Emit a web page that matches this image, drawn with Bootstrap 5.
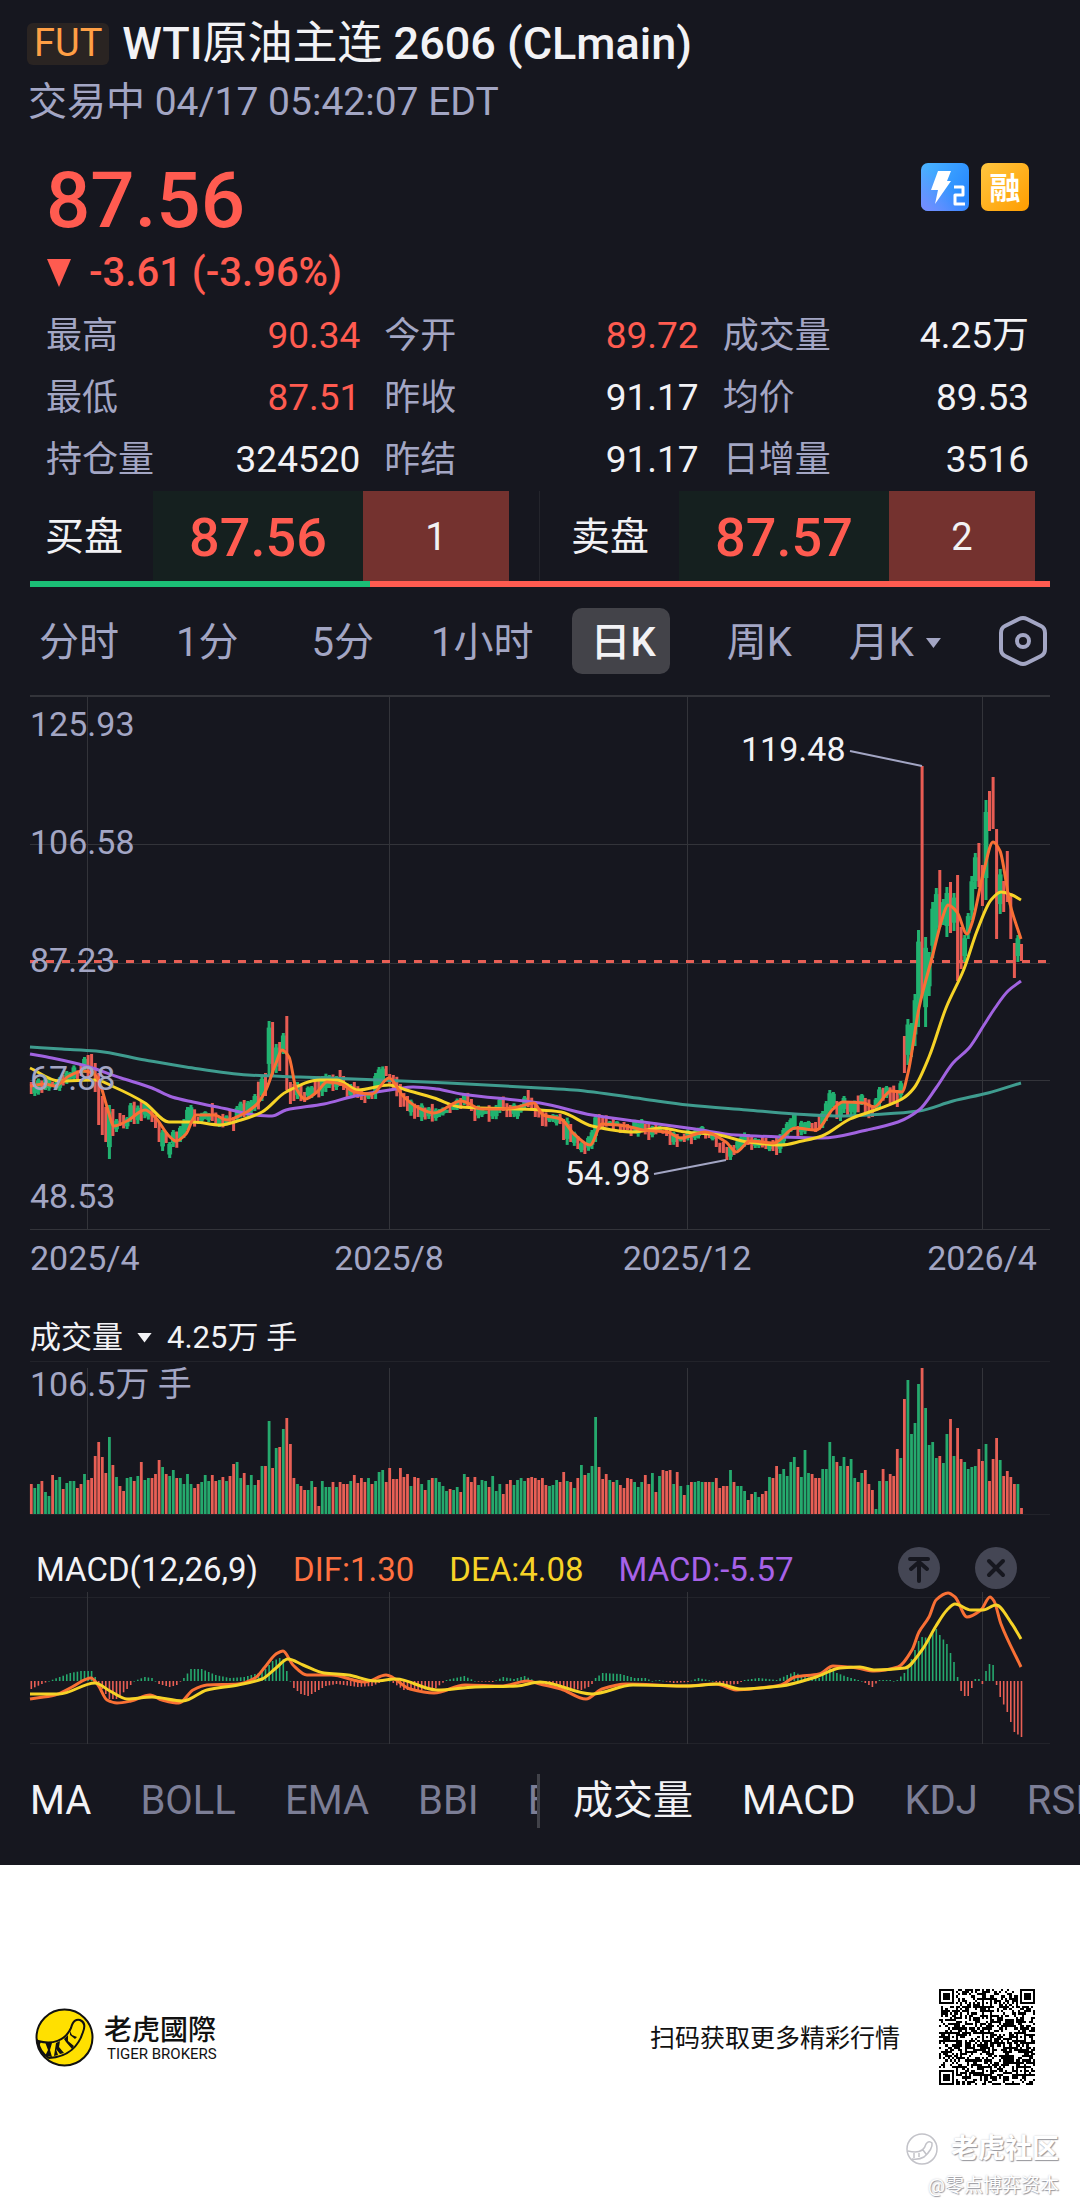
<!DOCTYPE html>
<html lang="zh-CN">
<head>
<meta charset="utf-8">
<meta name="viewport" content="width=device-width, initial-scale=1">
<title>WTI原油主连 2606 (CLmain)</title>
<link href="https://cdn.jsdelivr.net/npm/bootstrap@5.3.0/dist/css/bootstrap.min.css" rel="stylesheet">
<style>
:root{--ink:#16171f;--mist:#a3a6c4;--dim:#7c7e96;--snow:#f2f2f5;--down:#ff5b50;--up:#1bbf76}
body{background:#fff;color:var(--snow);font-family:Roboto,"Noto Sans CJK SC",sans-serif;margin:0}
.quote{background:var(--ink)}
.btn{--bs-btn-padding-x:0;--bs-btn-padding-y:0;--bs-btn-border-width:0px;--bs-btn-color:var(--mist);--bs-btn-hover-color:var(--snow);--bs-btn-border-radius:10px;--bs-btn-active-color:var(--snow)}
.quote-head{padding:14px 27px 0}
.quote-title{font-size:45px;line-height:60px;font-weight:500}
.kind-tag{font-size:38px;line-height:40px;height:42px;padding:0 7px;border-radius:6px;background:#2a2422;color:#ff9f45;margin-right:13px;font-weight:400}
.quote-time{font-size:39px;line-height:56px;color:var(--mist);padding-left:1px}
.quote-body{padding:31px 51px 0 46px}
.last-price{font-size:78px;line-height:80px;font-weight:500;color:var(--down)}
.price-change{font-size:40px;line-height:48px;font-weight:500;color:var(--down);margin-top:8px;gap:18px}
.marks{gap:12px;padding-top:2px}
.marks svg{width:48px;height:48px}
.stats{display:grid;grid-template-columns:314fr 314fr 306fr;column-gap:24px;margin:8px 0 0;line-height:62px}
.stats dt{font-size:36px;font-weight:400;color:var(--mist)}
.stats dd{font-size:37px;margin:0}
.fall{color:var(--down)}
.depth{margin:0 30px;height:90px}
.side{flex:1 1 0;padding-left:15px;padding-right:30px;border-right:1px solid #24252c}
.side-ask{padding-left:31px;padding-right:15px;border-right:0}
.side > div{padding-top:3px}
.side-name{font-size:39px}
.side-price{width:210px;background:#15201f;color:var(--down);font-size:54px;font-weight:500}
.side-qty{width:146px;background:#74322f;font-size:38px}
.balance{height:6px;margin:0 30px;background:var(--down)}
.balance div{background:var(--up)}
.periods{padding:21px 32px 22px 39px}
.periods .btn{font-size:40px;line-height:62px;padding-top:4px}
.periods .picked{background:#434349;color:var(--snow);font-weight:500;padding:4px 14px 0 18px;margin-left:-18px}
.periods .spread{margin-right:16px}
.caret{display:inline-block;width:15px;height:10px;background:currentColor;clip-path:polygon(0 0,100% 0,50% 100%)}
.plots{padding:0 30px}
.plots svg{display:block;width:100%;height:auto;overflow:visible}
.plots text{font-size:34px;fill:var(--mist)}
.plots .peak{fill:var(--snow)}
.grid-line{stroke:#33343a;stroke-width:1}
.grid-soft{stroke:#22232a;stroke-width:1}
.up-bar{fill:#25a96d}.down-bar{fill:#e85f55}
.up-candle{fill:#21b270}.down-candle{fill:#e85c53}
.curve{fill:none;stroke-width:3;stroke-linejoin:round}
.vol-head{margin-top:24px;font-size:31px;line-height:35px;gap:15px}
.vol-head .btn{font-size:31px;line-height:35px;color:var(--snow)}
.vol-head .caret{margin-left:14px}
.macd-head{margin-top:32px;padding:0 33px 0 6px;height:42px;margin-bottom:3px;font-size:33px;line-height:42px;gap:35px}
.macd-head span{padding-top:4px}
.macd-head svg{width:42px;height:42px}
.c-dif{color:#ff7140}.c-dea{color:#f6d327}.c-macd{color:#a762e8}
.indexes{padding:28px 0 37px}
.index-set{flex:1 1 0;min-width:0;height:54px;padding-left:30px;gap:49px;overflow:hidden;border-right:3px solid #414249}
.index-set + .index-set{border-right:0;padding-left:33px}
.index-set .btn{font-size:40px;line-height:54px;color:var(--dim);white-space:nowrap;flex:none}
.index-set .btn.on{color:var(--snow)}
.share{color:#111;padding:124px 45px 126px 35px}
.brand-logo{width:59px;height:59px;margin-right:10px}
.brand-zh{font-family:"Noto Sans CJK TC",sans-serif;font-size:28px;line-height:34px;font-weight:500}
.brand-en{font-size:15px;line-height:18px;padding-left:3px}
.scan-tip{font-size:25px;line-height:34px;padding-top:3px;margin-right:39px}
.qr{width:96px;height:96px}
.sign{padding:0 21px 8px 0;margin-top:-80px;color:#fff;text-shadow:1px 1px 1px #96969c,0 0 2px #c4c4c9}
.sign-name{font-size:27px;line-height:36px;font-weight:700;gap:13px}
.sign-name svg{width:32px;height:32px}
.sign-user{font-size:19px;line-height:38px}
</style>
</head>
<body>
<main class="quote overflow-hidden">
  <header class="quote-head">
    <h1 class="quote-title d-flex align-items-center m-0"><span class="kind-tag">FUT</span><span>WTI<span class="fw-normal">原油主连</span> 2606 (CLmain)</span></h1>
    <div class="quote-time">交易中 04/17 05:42:07 EDT</div>
  </header>

  <section class="quote-body">
    <div class="d-flex justify-content-between align-items-start">
      <div class="last-price">87.56</div>
      <div class="marks d-flex">
        <svg viewBox="0 0 48 48" role="img" aria-label="Level 2">
          <defs><linearGradient id="sky" x1="0" y1="0" x2="1" y2="0.6"><stop offset="0" stop-color="#4bb5ff"/><stop offset="1" stop-color="#2788ff"/></linearGradient>
          <linearGradient id="sky2" x1="0" y1="1" x2="0.5" y2="0.4"><stop offset="0" stop-color="#7a8bff"/><stop offset="1" stop-color="#7a8bff" stop-opacity="0"/></linearGradient></defs>
          <rect width="48" height="48" rx="7" fill="url(#sky)"/><rect width="48" height="48" rx="7" fill="url(#sky2)"/>
          <path d="M17 8h13l-4 10h4L14 41l3-14h-7z" fill="#fff"/>
          <path d="M33 24h9v8h-8v9h10" fill="none" stroke="#fff" stroke-width="3" stroke-linejoin="round"/>
        </svg>
        <svg viewBox="0 0 48 48">
          <defs><linearGradient id="gold" x1="0" y1="0" x2="1" y2="1"><stop offset="0" stop-color="#ffc640"/><stop offset="1" stop-color="#ff9d00"/></linearGradient></defs>
          <rect width="48" height="48" rx="7" fill="url(#gold)"/>
          <text x="24" y="36" text-anchor="middle" font-size="31" font-weight="700" fill="#fff">融</text>
        </svg>
      </div>
    </div>
    <div class="price-change d-flex align-items-center">
      <svg width="25" height="28" viewBox="0 0 50 56" aria-hidden="true"><path d="M2 0h48L26 56z" fill="currentColor"/></svg>
      <span>-3.61 (-3.96%)</span>
    </div>
    <dl class="stats">
      <div class="d-flex justify-content-between"><dt>最高</dt><dd class="fall">90.34</dd></div>
      <div class="d-flex justify-content-between"><dt>今开</dt><dd class="fall">89.72</dd></div>
      <div class="d-flex justify-content-between"><dt>成交量</dt><dd>4.25万</dd></div>
      <div class="d-flex justify-content-between"><dt>最低</dt><dd class="fall">87.51</dd></div>
      <div class="d-flex justify-content-between"><dt>昨收</dt><dd>91.17</dd></div>
      <div class="d-flex justify-content-between"><dt>均价</dt><dd>89.53</dd></div>
      <div class="d-flex justify-content-between"><dt>持仓量</dt><dd>324520</dd></div>
      <div class="d-flex justify-content-between"><dt>昨结</dt><dd>91.17</dd></div>
      <div class="d-flex justify-content-between"><dt>日增量</dt><dd>3516</dd></div>
    </dl>
  </section>

  <section class="depth d-flex">
    <div class="side d-flex">
      <div class="side-name flex-grow-1 d-flex align-items-center">买盘</div>
      <div class="side-price d-flex align-items-center justify-content-center">87.56</div>
      <div class="side-qty d-flex align-items-center justify-content-center">1</div>
    </div>
    <div class="side side-ask d-flex">
      <div class="side-name flex-grow-1 d-flex align-items-center">卖盘</div>
      <div class="side-price d-flex align-items-center justify-content-center">87.57</div>
      <div class="side-qty d-flex align-items-center justify-content-center">2</div>
    </div>
  </section>
  <div class="balance d-flex"><div style="width:33.3%"></div></div>

  <nav class="periods d-flex justify-content-between align-items-center" aria-label="周期">
    <button class="btn" type="button">分时</button>
    <button class="btn spread" type="button">1分</button>
    <button class="btn" type="button">5分</button>
    <button class="btn" type="button">1小时</button>
    <button class="btn picked" type="button">日K</button>
    <button class="btn" type="button">周K</button>
    <button class="btn d-flex align-items-center gap-2" type="button">月K<span class="caret ms-1"></span></button>
    <button class="btn d-flex pt-0" type="button" aria-label="设置">
      <svg width="50" height="52" viewBox="0 0 50 52" fill="none" stroke="currentColor" stroke-width="4"><path d="M21 4Q25 2 29 4L43 11Q47 13 47 18V34Q47 39 43 41L29 48Q25 50 21 48L7 41Q3 39 3 34V18Q3 13 7 11Z"/><circle cx="25" cy="26" r="6"/></svg>
    </button>
  </nav>

  <section class="plots">
    <svg id="kline" viewBox="0 0 1020 600" role="img" aria-label="日K">
      <path d="M0 0H1020" stroke="#33343a" stroke-width="2"/>
      <path class="grid-line" d="M0 148.5H1020M0 267.5H1020M0 384.5H1020M0 533.5H1020M57.5 0V534M359.5 0V534M657.5 0V534M952.5 0V534"/>
      <path d="M0 265.5H1018" stroke="#e85f55" stroke-width="3" stroke-dasharray="8 8"/>
      <g id="candles"></g>
      <path class="curve" stroke="#3f9c8f" data-points="0,351 32,353 66,355 115,364 156,371 218,379 270,381 349,384 418,387 510,392 544,394 613,403 658,409 717,414 765,418 806,420 854,418 889,415 923,405 958,397 991,387"/>
      <path class="curve" stroke="#a163e0" data-points="0,358 22,362 56,370 91,382 122,392 142,401 163,406 197,413 225,419 242,420 256,414 294,408 325,400 366,393 383,391 407,393 431,398 510,407 562,419 613,426 665,433 706,439 751,441 792,442 837,434 868,426 889,414 906,392 923,367 939,352 954,329 965,312 978,295 991,285"/>
      <path class="curve" stroke="#f6d327" data-points="0,372 29,385 66,384 84,391 115,407 139,426 163,426 190,429 211,424 232,416 256,396 290,384 307,384 328,394 359,389 376,394 404,402 431,411 510,414 531,416 562,430 603,436 631,432 655,436 689,439 717,446 751,449 772,445 792,440 820,423 848,413 872,403 884,392 899,361 916,312 934,273 947,235 961,204 971,196 982,199 991,204"/>
      <path class="curve" stroke="#f97035" data-points="0,390 15,388 25,390 39,380 53,375 63,377 70,388 77,411 84,430 97,425 115,414 125,421 139,440 146,445 156,438 166,419 184,419 197,424 211,419 225,410 235,396 246,367 252,354 259,361 266,392 275,403 287,396 297,386 311,388 325,396 342,398 359,382 373,400 387,411 404,417 431,405 452,413 469,413 487,411 504,407 513,419 531,423 544,438 560,449 572,428 596,430 613,434 637,436 651,442 675,436 696,446 706,456 720,445 744,447 765,432 786,434 803,413 813,406 834,407 844,411 861,395 872,396 878,377 889,312 903,258 913,220 918,209 927,216 937,238 942,227 954,174 963,146 970,155 980,208 991,243"/>
      <path d="M820 55L892 70M624 478L696 464" stroke="#a3a6c4" stroke-width="2"/>
      <text x="0" y="40">125.93</text><text x="0" y="158">106.58</text><text x="0" y="276">87.23</text><text x="0" y="394">67.88</text><text x="0" y="512">48.53</text>
      <text class="peak" x="711" y="65">119.48</text><text class="peak" x="535" y="489">54.98</text>
      <text x="0" y="574">2025/4</text><text x="359" y="574" text-anchor="middle">2025/8</text><text x="657" y="574" text-anchor="middle">2025/12</text><text x="952" y="574" text-anchor="middle">2026/4</text>
    </svg>

    <div class="vol-head d-flex align-items-center">
      <button class="btn d-flex align-items-center" type="button">成交量<span class="caret"></span></button>
      <span>4.25万 手</span>
    </div>
    <svg viewBox="0 0 1020 160" role="img" aria-label="成交量">
      <path class="grid-soft" d="M0 6.5H1020M0 159.5H1020"/>
      <path class="grid-line" d="M57.5 13V159M359.5 13V159M657.5 13V159M952.5 13V159"/>
      <g id="volumes"></g>
      <text x="0" y="41">106.5万 手</text>
    </svg>

    <div class="macd-head d-flex align-items-center">
      <span>MACD(12,26,9)</span><span class="c-dif">DIF:1.30</span><span class="c-dea">DEA:4.08</span><span class="c-macd">MACD:-5.57</span>
      <button class="btn d-flex ms-auto" type="button" aria-label="置顶"><svg viewBox="0 0 42 42"><circle cx="21" cy="21" r="21" fill="#444654"/><path d="M12 12H30M21 34V17M13 22L21 15L29 22" fill="none" stroke="#16171f" stroke-width="4" stroke-linecap="round" stroke-linejoin="round"/></svg></button>
      <button class="btn d-flex" type="button" aria-label="关闭"><svg viewBox="0 0 42 42"><circle cx="21" cy="21" r="21" fill="#444654"/><path d="M14 14L28 28M28 14L14 28" stroke="#16171f" stroke-width="4" stroke-linecap="round"/></svg></button>
    </div>
    <svg viewBox="0 0 1020 154" role="img" aria-label="MACD">
      <path class="grid-soft" d="M0 5.5H1020M0 151.5H1020"/>
      <path class="grid-line" d="M57.5 0V152M359.5 0V152M657.5 0V152M952.5 0V152"/>
      <g id="histogram"></g>
      <path class="curve" stroke="#f97035" data-points="0,107 25,103 42,95 61,86 68,93 77,108 87,111 101,109 120,103 132,108 149,111 163,98 177,93 208,92 225,86 235,75 246,62 253,59 263,73 277,83 301,83 335,90 356,83 380,97 404,101 435,93 473,94 497,89 510,92 531,97 556,107 572,97 596,92 655,94 686,92 706,98 730,96 751,93 765,85 789,82 803,74 827,76 844,79 868,75 882,58 889,40 899,25 906,8 918,1 925,5 937,25 951,18 960,5 964,9 971,32 991,75"/>
      <path class="curve" stroke="#f6d327" data-points="0,102 29,102 65,91 80,99 97,107 122,105 153,109 177,98 208,93 232,87 246,76 258,67 273,73 294,81 318,83 345,89 366,87 407,98 445,95 487,94 510,90 562,102 603,93 658,94 689,92 710,97 751,94 786,85 810,76 830,75 844,78 875,76 892,58 906,34 917,18 925,12 941,18 953,18 966,13 982,32 991,47"/>
    </svg>
  </section>

  <nav class="indexes d-flex" aria-label="指标">
    <div class="index-set d-flex">
      <button class="btn on" type="button">MA</button><button class="btn" type="button">BOLL</button><button class="btn" type="button">EMA</button><button class="btn" type="button">BBI</button><button class="btn" type="button">E</button>
    </div>
    <div class="index-set d-flex">
      <button class="btn on" type="button">成交量</button><button class="btn on" type="button">MACD</button><button class="btn" type="button">KDJ</button><button class="btn" type="button">RSI</button>
    </div>
  </nav>
</main>

<footer class="overflow-hidden">
  <div class="share d-flex align-items-center">
    <svg class="brand-logo" viewBox="0 0 59 59" aria-hidden="true">
      <circle cx="29.5" cy="29.5" r="28" fill="#ffe000" stroke="#111" stroke-width="2"/>
      <path d="M3 33C17 37 30 33 36 20C38 12 42 11 45 12C50 14 50 19 48 24C44 37 34 49 14 50C7 46 4 40 3 33Z" fill="#ffe000" stroke="#111" stroke-width="2"/>
      <path d="M2 31L6 34L4 38L7 43L3 40ZM10 34L17 35L15 42L17 49L10 48L13 42ZM21 35L25 33L24 39L29 45L25 46L21 41L23 47L19 48ZM29 31L33 27L33 33L39 38L37 41L31 34ZM35 23L37 27L42 29L40 31L35 27Z" fill="#111"/>
    </svg>
    <div>
      <div class="brand-zh">老虎國際</div>
      <div class="brand-en">TIGER BROKERS</div>
    </div>
    <div class="scan-tip ms-auto">扫码获取更多精彩行情</div>
    <svg class="qr" viewBox="0 0 45 45" shape-rendering="crispEdges" role="img" aria-label="二维码"><path id="qr" fill="#000"/></svg>
  </div>
  <div class="sign d-flex flex-column align-items-end">
    <div class="sign-name d-flex align-items-center">
      <svg viewBox="0 0 32 32" fill="none" stroke="#c3c3c9" stroke-width="1.5" aria-hidden="true"><circle cx="16" cy="16" r="15"/><path d="M2 18Q17 22 20 11Q23 7 26 10Q27 16 18 24Q13 27 6 26M8 20V25M13 20V24M17 17L20 21"/></svg>
      <span>老虎社区</span>
    </div>
    <div class="sign-user">@零点博弈资本</div>
  </div>
</footer>

<script src="https://cdn.jsdelivr.net/npm/bootstrap@5.3.0/dist/js/bootstrap.bundle.min.js"></script>
<script>
const STEP = 3.549, START = 1.3;
const X = i => START + STEP * i;
const noise = n => { const s = Math.sin(n * 12.9898) * 43758.5453; return s - Math.floor(s); };

// daily volume: bar height, r = close below open, g = close above open
const volume = ("30r 26g 30g 33r 22g 18g 39r 34g 37g 25r 31g 33g 33g 26r 30r 40g 34r 36r 58r 72r 57r 41r 77g 49r 37g 28r 23r 36g 37g 33r 38g 52r 34g 36g 36r 40r 54r 47g 40r 38g 44g 36r 36g 30g 40g 30g 26r 30r 32g 39g 33g 39r 33r 34g 37r 33g 38r 50r 52g 36g 41r 29g 39g 29g 34r 48g 48r 93g 46r 66g 67r 85g 96r 70r 36r 30g 28r 24r 24g 33g 27r 8r 33g 27g 27g 32r 27g 32r 30r 30r 33g 39r 31r 36r 32r 36g 30r 33g 42g 44g 32r 46r 35r 35r 46r 37r 40r 28g 37r 36r 30g 24r 34g 36r 36g 32g 28g 23g 25r 24g 27g 22r 40g 37r 32r 37r 29g 34g 33g 27r 38g 23g 30g 20r 30r 34r 29g 34g 36g 33g 36r 37r 36r 34r "
+ "36r 29r 28g 29g 34g 32r 42r 33g 32r 26g 36r 49g 39r 41g 48g 97g 47r 35r 40r 34g 32r 34g 29r 26r 36r 35r 32g 27g 32g 39r 30r 41g 22r 38g 44r 43r 44r 30g 42r 28g 19r 29g 32r 32g 33g 32g 32r 32r 32g 36r 26r 28r 28r 44g 32r 28g 28g 23g 14r 20r 22g 17g 20r 23r 37g 36r 48r 40g 45g 38g 52g 57g 47r 37g 64g 41g 40r 36r 36r 45g 45g 72g 58g 52r 48g 57g 48r 55g 36g 32r 41g 44r 30r 24r 5g 33g 45r 33g 40r 38r 65r 56g 115r 134g 80g 91g 130g 146r 106g 69g 72g 56g 58r 51g 80g 95r 58g 86r 55r 52g 45g 47g 48g 65r 53r 70g 33r 55r 76r 54g 38r 43r 37r 30r 30g 6r").split(" ");

// price range: day, top, bottom; days left out are filled in between
const range = "0,386,398 1,388,400 4,382,394 7,386,394 10,375,388 14,369,380 15,361,377 16,359,384 17,358,380 18,367,396 19,377,429 20,400,439 21,411,446 22,409,463 23,413,440 24,423,436 25,417,430 27,421,433 28,407,426 31,405,425 34,413,426 35,419,432 36,426,446 37,434,455 38,436,447 39,446,462 40,434,451 42,430,446 43,423,442 44,411,434 45,409,428 47,421,428 50,417,426 51,407,425 53,421,431 56,414,428 57,421,435 58,410,426 61,405,421 63,398,415 65,380,405 66,377,400 67,325,380 68,326,380 69,348,377 70,346,375 71,337,358 72,320,394 73,386,408 74,388,405 75,386,403 77,396,406 79,390,402 80,382,398 82,380,400 84,379,392 86,380,394 87,374,390 88,380,394 90,388,402 91,386,400 93,394,404 95,396,403 96,396,403 97,377,403 98,371,392 100,370,380 102,379,394 104,388,411 106,400,415 109,409,421 112,411,423 115,413,421 118,409,417 121,402,413 122,397,409 124,403,415 125,411,425 127,411,421 130,411,423 132,402,417 135,409,421 137,411,423 139,400,413 140,394,411 142,405,421 144,413,430 147,418,426 149,418,428 150,423,444 152,428,446 154,440,453 156,446,458 158,434,453 159,418,446 160,418,434 163,425,430 167,426,434 169,430,440 172,423,436 174,428,444 177,430,436 179,432,440 180,434,449 182,438,451 184,438,446 187,434,444 189,430,438 191,436,442 193,440,451 195,446,457 196,451,464 197,449,464 198,449,459 200,440,453 202,438,449 204,442,452 207,442,453 209,444,455 210,442,459 211,438,457 212,432,449 213,426,442 215,417,434 216,430,440 218,426,438 221,426,436 223,415,432 224,405,425 225,394,421 226,396,411 227,405,423 228,407,425 229,400,417 231,405,419 234,398,409 235,402,419 237,409,421 238,402,415 239,391,411 241,390,402 244,394,411 245,385,403 246,340,377 247,323,369 248,327,361 249,298,350 250,234,331 251,70,300 252,241,331 253,256,300 254,206,262 255,192,243 256,174,231 257,203,229 258,191,241 259,186,237 260,197,235 261,179,285 262,231,273 263,239,266 264,217,243 265,180,224 266,157,193 267,147,191 268,169,210 269,104,204 270,95,135 271,81,133 272,133,243 273,173,218 274,185,216 275,155,206 276,197,243 277,247,282 278,239,266 279,248,265"
  .split(" ").map(s => s.split(",").map(Number));

const macd = "0,-8 3,-3 5,0 8,4 11,8 14,10 17,10 18,4 20,-8 22,-18 24,-18 27,-8 29,0 32,4 34,3 36,-3 39,-6 41,-4 43,3 45,12 48,12 52,6 56,3 60,4 64,8 66,12 68,20 70,23 71,22 72,10 73,0 74,-7 76,-13 78,-15 80,-11 83,-5 86,-3 92,-6 96,-5 98,-2 100,2 102,-2 105,-9 110,-9 114,-7 117,1 122,5 125,0 130,-1 133,4 136,2 139,5 142,0 145,-3 150,-6 155,-9 157,-6 158,-3 159,3 161,8 166,7 170,3 173,3 175,0 177,1 181,-2 185,-1 188,3 192,0 196,-4 199,-3 201,1 205,3 210,1 213,6 215,9 218,4 222,3 225,13 227,8 230,4 233,1 234,0 237,-6 239,1 242,1 243,0 244,1 246,8 248,22 250,40 251,44 253,43 255,52 256,46 258,37 260,19 261,4 262,-10 263,-15 264,-15 265,-7 266,2 267,2 268,-3 269,10 270,17 271,16 272,-4 273,-16 275,-31 277,-51 279,-56"
  .split(" ").map(s => s.split(",").map(Number));

function fill(keys, i) {
  const k = keys.findIndex(p => p[0] >= i), b = keys[k];
  if (b[0] === i) return { v: b.slice(1), exact: true };
  const a = keys[k - 1], t = (i - a[0]) / (b[0] - a[0]);
  return { v: a.slice(1).map((n, j) => n + (b[j + 1] - n) * t), exact: false };
}
const rect = (cls, x, y, w, h) => `<rect class="${cls}" x="${x.toFixed(1)}" y="${y.toFixed(1)}" width="${w}" height="${h.toFixed(1)}"/>`;

let candles = "", bars = "", hist = "";
volume.forEach((entry, i) => {
  const tone = entry.endsWith("g") ? "up" : "down", h = parseFloat(entry);
  bars += rect(tone + "-bar", X(i) - 1.4, 159 - h, 2.8, h);

  const r = fill(range, i);
  let [top, low] = r.v;
  if (!r.exact) { top += noise(i) * 8 - 4; low += noise(i + 400) * 8 - 4; }
  candles += rect(tone + "-candle", X(i) - 1.5, top, 3, Math.max(low - top, 3));
  if (tone === "up") {
    const span = low - top;
    candles += rect("up-candle", X(i) - 2.4, top + span * 0.12, 4.8, Math.max(span * 0.66, 3));
  }

  const m = fill(macd, i).v[0];
  hist += rect((m >= 0 ? "up" : "down") + "-bar", X(i) - 0.8, m >= 0 ? 89 - m : 89, 1.6, Math.max(Math.abs(m), 0.6));
});
document.getElementById("candles").innerHTML = candles;
document.getElementById("volumes").innerHTML = bars;
document.getElementById("histogram").innerHTML = hist;

// averages run as a smooth monotone curve through their points
document.querySelectorAll(".curve").forEach(el => {
  const p = el.dataset.points.split(" ").map(s => s.split(",").map(Number));
  const slope = p.map((_, k) => {
    if (k === 0 || k === p.length - 1) return 0;
    const a = (p[k][1] - p[k - 1][1]) / (p[k][0] - p[k - 1][0]);
    const b = (p[k + 1][1] - p[k][1]) / (p[k + 1][0] - p[k][0]);
    return a * b <= 0 ? 0 : 2 * a * b / (a + b);
  });
  const n = p.length - 1;
  slope[0] = (p[1][1] - p[0][1]) / (p[1][0] - p[0][0]);
  slope[n] = (p[n][1] - p[n - 1][1]) / (p[n][0] - p[n - 1][0]);
  let d = `M${p[0]}`;
  for (let k = 1; k <= n; k++) {
    const w = (p[k][0] - p[k - 1][0]) / 3;
    d += `C${p[k - 1][0] + w} ${p[k - 1][1] + slope[k - 1] * w} ${p[k][0] - w} ${p[k][1] - slope[k] * w} ${p[k]}`;
  }
  el.setAttribute("d", d);
});

// 45-module code: finder, alignment and timing patterns, then the data area
const ring = (x, y, cx, cy) => Math.max(Math.abs(x - cx), Math.abs(y - cy));
function dark(x, y) {
  for (const [cx, cy] of [[3, 3], [41, 3], [3, 41]]) {
    const d = ring(x, y, cx, cy);
    if (d <= 4) return d !== 2 && d !== 4;
  }
  for (const [cx, cy] of [[22, 6], [6, 22], [22, 22], [38, 22], [22, 38], [38, 38]]) {
    const d = ring(x, y, cx, cy);
    if (d <= 2) return d !== 1;
  }
  if (x === 6 || y === 6) return (x + y) % 2 === 0;
  return noise(x * 47 + y * 131) > 0.48;
}
let modules = "";
for (let y = 0; y < 45; y++) for (let x = 0; x < 45; x++) if (dark(x, y)) modules += `M${x} ${y}h1v1h-1z`;
document.getElementById("qr").setAttribute("d", modules);
</script>
</body>
</html>
